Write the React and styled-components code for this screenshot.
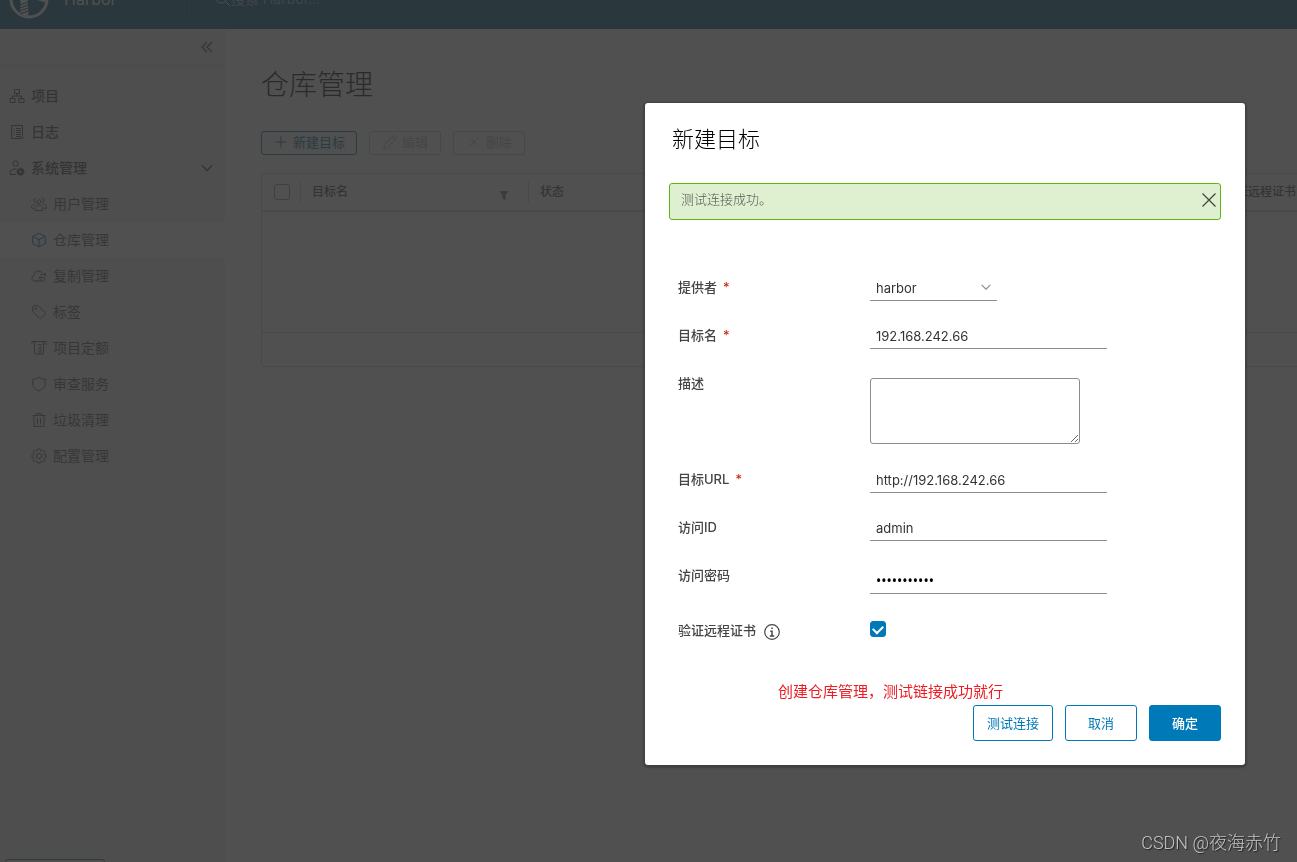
import React, { useState } from 'react'
import styled, { createGlobalStyle, css } from 'styled-components'

const menuItems = [
    { label: '用户管理', icon: 'users' },
    { label: '仓库管理', icon: 'block', active: true },
    { label: '复制管理', icon: 'cloud' },
    { label: '标签', icon: 'tag' },
    { label: '项目定额', icon: 'quota' },
    { label: '审查服务', icon: 'shield' },
    { label: '垃圾清理', icon: 'trash' },
    { label: '配置管理', icon: 'cog' },
]

const shapes = {
    organization: <path d="M5.5 1.5h5v4h-5zM1 10.5h5v4H1zM10 10.5h5v4h-5zM8 5.500v2.500M3.500 10V8h9v2" />,
    list: <><path d="M2.500 1.500h11v13h-11z" /><path d="M4.500 4.500h1M4.500 6.500h1M4.500 8.500h1M4.500 10.500h1M7 4.500h5M7 6.500h5M7 8.500h5M7 10.500h5M7 12.500h5" /></>,
    admin: <>
        <circle cx="6.500" cy="3.500" r="2.700" />
        <path d="M7 14.500H1.200v-2.500C2 9.700 4.500 8.500 7.500 9" />
        <circle cx="11.500" cy="11.700" r="2.200" strokeWidth="2" />
        <path d="M11.500 7.700v1.600M11.500 14.100v1.600M7.500 11.700h1.600M13.900 11.700h1.600M8.700 8.900l1.100 1.100M13.200 13.400l1.100 1.100M14.300 8.900l-1.100 1.100M9.800 13.400l-1.100 1.100" strokeWidth="1.500" />
    </>,
    users: <>
        <circle cx="8" cy="5.700" r="2" />
        <path d="M4.200 14.500v-2.700c.8-3.500 6.800-3.500 7.600 0v2.700zM4.800 6.500C2.300 6 2 2.500 4.800 2.200M11.200 6.500c2.500-.5 2.800-4 0-4.300M4 8.200C2.200 8.200 1 9 .7 10.500v1.800h2M12 8.200c1.800 0 3 .8 3.300 2.300v1.800h-2" />
    </>,
    block: <path d="M8 1.200l6.300 3.200v7.200L8 14.800l-6.300-3.200V4.400zM1.700 4.400L8 7.600l6.300-3.200M8 7.600v7.200" />,
    cloud: <path d="M14 10.500c-.3 1.800-1.300 2.500-3 2.500H4C.8 13-.3 9 2.700 7.800 2.800 3 9 1.500 11 5M9.500 6.500H15M13.300 4.800L15 6.500l-1.700 1.700M13.500 9.800H8M9.700 8.100L8 9.800l1.700 1.700" />,
    tag: <><path d="M1.700 2.700v4.800l6.800 6.800c.5.500 1 .5 1.500 0l4.200-4.200c.5-.5.5-1 0-1.500L7.500 1.800H2.600z" /><circle cx="4.600" cy="4.600" r=".7" /></>,
    quota: <path d="M1 4V1.500h14V5M3.500 1.500v11q0 1.500 1.500 1.500h7.500V1.500M7 4.500h3.500M8.500 6.500h2M7 8.500h3.500M8.500 10.500h2M7 12h3.500" />,
    shield: <path d="M8 1.200c2 1.400 4 2 6.200 2v5c0 3-2.500 5-6.200 6.800C4.300 13.200 1.800 11.200 1.800 8.200v-5C4 3.200 6 2.600 8 1.200z" />,
    trash: <path d="M1.500 3.500h13M5.500 3.500v-2h5v2M3 4v10.500h10V4M6.500 6v6.500M9.500 6v6.500" />,
    cog: <>
        <circle cx="8" cy="8" r="2.600" />
        <path d="M6.800 1h2.400l.5 1.900 1 .4 1.700-1 1.700 1.700-1 1.700.4 1 1.700.5v1.800l-1.700.5-.4 1 1 1.700-1.700 1.700-1.700-1-1 .4L9.200 15H6.800l-.5-1.700-1-.4-1.700 1-1.700-1.700 1-1.700-.4-1L.8 9V7.200l1.700-.5.4-1-1-1.700 1.700-1.700 1.700 1 1-.4z" />
    </>,
    search: <><circle cx="6.500" cy="6.500" r="5.500" /><path d="M10.500 10.500l5 5" /></>,
    collapse: <path d="M8 3L3 8l5 5M13 3L8 8l5 5" />,
    angle: <path d="M3 5.500l5 5 5-5" />,
    plus: <path d="M8 2.500v11M2.500 8h11" />,
    pencil: <path d="M1.500 14.500l1-4L11.800 1.200l3 3L5.500 13.500zM10 3l3 3" />,
    times: <path d="M3.500 3.500l9 9M12.500 3.500l-9 9" />,
    close: <path d="M1.500 1.500l13 13M14.500 1.500l-13 13" />,
    filter: <path d="M3.500 4h9L9.200 8v5l-2.400-1.200V8z" fill="currentColor" />,
    info: <><circle cx="8" cy="8" r="7.300" /><path d="M8 3.500v1.600M6.300 7.200H8v4.800M5.800 12.100h4.500" strokeWidth="1.500" /></>,
}

function Icon({ name, size = 16, weight = 1 }) {
    return (
        <Svg width={size} height={size} viewBox="0 0 16 16" strokeWidth={weight} aria-hidden="true">
            {shapes[name]}
        </Svg>
    )
}

function Logo() {
    return (
        <Svg width="40" height="40" viewBox="0 0 40 40" strokeWidth="3" aria-hidden="true">
            <circle cx="20" cy="20" r="18" />
            <path d="M12 8h6l1.500 29-8.500-2z" fill="currentColor" stroke="none" />
            <path d="M11 26l8-3M11 29l8-3M11 32l8-3M11 35l8-3" stroke="#00567a" strokeWidth="1" />
            <path d="M18 18l20 1v5z" fill="currentColor" stroke="none" />
        </Svg>
    )
}

function Sidebar() {
    return (
        <Side>
            <CollapseRow>
                <IconButton type="button" aria-label="collapse"><Icon name="collapse" weight={1.3} /></IconButton>
            </CollapseRow>
            <Nav>
                <NavLink href="#projects"><Icon name="organization" />项目</NavLink>
                <NavLink href="#logs"><Icon name="list" />日志</NavLink>
                <NavLink href="#admin"><Icon name="admin" /><span>系统管理</span><Icon name="angle" weight={1.5} /></NavLink>
                {menuItems.map((item) => (
                    <NavLink key={item.icon} href={'#' + item.icon} $sub $active={item.active}>
                        <Icon name={item.icon} />{item.label}
                    </NavLink>
                ))}
            </Nav>
            <SideFoot>
                <ThemeButton type="button" aria-label="theme" />
            </SideFoot>
        </Side>
    )
}

function Registries() {
    return (
        <Main>
            <PageTitle>仓库管理</PageTitle>
            <Toolbar>
                <SmallButton type="button" $primary><Icon name="plus" />新建目标</SmallButton>
                <SmallButton type="button" disabled><Icon name="pencil" />编辑</SmallButton>
                <SmallButton type="button" disabled><Icon name="times" />删除</SmallButton>
            </Toolbar>
            <Grid>
                <thead>
                    <tr>
                        <CheckHead><GridCheck type="checkbox" aria-label="select all" /></CheckHead>
                        <Head><HeadCell>目标名<Icon name="filter" size={14} /></HeadCell></Head>
                        <Head><HeadCell>状态</HeadCell></Head>
                        <Head><HeadCell>目标URL</HeadCell></Head>
                        <Head><HeadCell>提供者</HeadCell></Head>
                        <Head><HeadCell>验证远程证书</HeadCell></Head>
                    </tr>
                </thead>
                <tbody>
                    <tr><EmptyCell colSpan="6" /></tr>
                </tbody>
                <tfoot>
                    <tr><FootCell colSpan="6" /></tr>
                </tfoot>
            </Grid>
        </Main>
    )
}

function CreateDialog() {
    const [values, setValues] = useState({
        provider: 'harbor',
        name: '192.168.242.66',
        description: '',
        url: 'http://192.168.242.66',
        accessId: 'admin',
        secret: 'Harbor12345',
        verify: true,
    })

    const change = (key) => (e) => {
        const value = e.target.type === 'checkbox' ? e.target.checked : e.target.value
        setValues({ ...values, [key]: value })
    }

    return (
        <Dialog role="dialog" aria-labelledby="dialog-title">
            <DialogTitle id="dialog-title">新建目标</DialogTitle>
            <Alert>
                <span>测试连接成功。</span>
                <IconButton type="button" aria-label="close"><Icon name="close" weight={1.3} /></IconButton>
            </Alert>
            <Form>
                <Row>
                    <Label htmlFor="provider">提供者<Required>*</Required></Label>
                    <SelectWrap>
                        <Select id="provider" value={values.provider} onChange={change('provider')}>
                            <option>harbor</option>
                        </Select>
                        <Icon name="angle" size={14} weight={1.3} />
                    </SelectWrap>
                </Row>
                <Row>
                    <Label htmlFor="name">目标名<Required>*</Required></Label>
                    <Input id="name" value={values.name} onChange={change('name')} />
                </Row>
                <Row>
                    <Label htmlFor="description">描述</Label>
                    <TextArea id="description" value={values.description} onChange={change('description')} />
                </Row>
                <Row>
                    <Label htmlFor="url">目标URL<Required>*</Required></Label>
                    <Input id="url" value={values.url} onChange={change('url')} />
                </Row>
                <Row>
                    <Label htmlFor="accessId">访问ID</Label>
                    <Input id="accessId" value={values.accessId} onChange={change('accessId')} />
                </Row>
                <Row>
                    <Label htmlFor="secret">访问密码</Label>
                    <Password id="secret" type="password" value={values.secret} onChange={change('secret')} />
                </Row>
                <Row $center>
                    <Label htmlFor="verify">验证远程证书<Icon name="info" weight={1.2} /></Label>
                    <Checkbox id="verify" type="checkbox" checked={values.verify} onChange={change('verify')} />
                </Row>
            </Form>
            <Note>创建仓库管理，测试链接成功就行</Note>
            <Footer>
                <Button type="button" $wide>测试连接</Button>
                <Button type="button">取消</Button>
                <Button type="button" $solid>确定</Button>
            </Footer>
        </Dialog>
    )
}

function App() {
    return (
        <React.Fragment>
            <GlobalStyle />
            <Page>
                <Header>
                    <HeaderInner>
                        <Brand href="#home"><Logo />Harbor</Brand>
                        <SearchBox>
                            <Icon name="search" />
                            <SearchInput aria-label="search" placeholder="搜索 Harbor..." />
                        </SearchBox>
                    </HeaderInner>
                </Header>
                <Content>
                    <Sidebar />
                    <Registries />
                </Content>
            </Page>
            <Backdrop>
                <CreateDialog />
            </Backdrop>
            <Watermark>CSDN @夜海赤竹</Watermark>
        </React.Fragment>
    )
}

export default App

const GlobalStyle = createGlobalStyle`
* {
    box-sizing: border-box;
}
body {
    margin: 0;
    background: #fafafa;
    color: #454545;
    font-family: Inter, "Noto Sans CJK SC", sans-serif;
    font-size: 13px;
    line-height: 20px;
}
button, input, select, textarea {
    font: inherit;
    color: inherit;
}
`

const Svg = styled.svg`
flex: none;
fill: none;
stroke: currentColor;
`

const Page = styled.div`
display: flex;
flex-direction: column;
height: 100vh;
overflow: hidden;
`

// only the lower part of the bar stays in view
const Header = styled.header`
display: flex;
align-items: flex-end;
flex: none;
height: 29px;
overflow: hidden;
background: #00567a;
color: #fafafa;
`

const HeaderInner = styled.div`
display: flex;
align-items: center;
flex: none;
width: 100%;
height: 60px;
`

const Brand = styled.a`
display: flex;
align-items: center;
gap: 15px;
width: 190px;
height: 38px;
padding-left: 9px;
border-right: 1px solid #1f6a8a;
color: inherit;
font-size: 16px;
text-decoration: none;
`

const SearchBox = styled.div`
display: flex;
align-items: center;
padding-left: 25px;
`

const SearchInput = styled.input`
width: 200px;
padding: 0;
border: 0;
background: none;
font-size: 14px;
&::placeholder {
    color: #8fb4c8;
}
`

const Content = styled.div`
display: flex;
flex: 1;
min-height: 0;
`

const Side = styled.aside`
display: flex;
flex-direction: column;
flex: none;
width: 225px;
background: #eee;
`

const CollapseRow = styled.div`
display: flex;
justify-content: flex-end;
align-items: center;
height: 37px;
padding-right: 10px;
border-bottom: 1px solid #d8d8d8;
`

const IconButton = styled.button`
display: flex;
padding: 0;
border: 0;
background: none;
color: #454545;
cursor: pointer;
`

const Nav = styled.nav`
display: flex;
flex-direction: column;
flex: 1;
padding-top: 12px;
`

const NavLink = styled.a`
display: flex;
align-items: center;
gap: 6px;
height: 36px;
padding: 0 10px 0 ${(props) => props.$sub ? '31px' : '9px'};
background: ${(props) => props.$active ? '#fcfcfc' : 'none'};
color: ${(props) => props.$sub ? '#565656' : '#454545'};
font-size: 14px;
font-weight: ${(props) => props.$sub ? 400 : 500};
text-decoration: none;
& > span {
    flex: 1;
}
& > svg {
    color: ${(props) => props.$active ? '#0072a3' : 'inherit'};
}
`

const SideFoot = styled.div`
height: 3px;
padding-left: 5px;
overflow: hidden;
`

const ThemeButton = styled.button`
display: block;
width: 100px;
height: 24px;
border: 1px solid #0072a3;
border-radius: 3px;
background: none;
`

const Main = styled.main`
flex: 1;
min-width: 0;
padding: 36px 0 0 36px;
overflow: hidden;
`

const PageTitle = styled.h1`
margin: 0;
color: #000;
font-size: 28px;
font-weight: 200;
line-height: 40px;
`

const Toolbar = styled.div`
display: flex;
gap: 12px;
margin: 26px 0 18px;
`

const SmallButton = styled.button`
display: flex;
align-items: center;
justify-content: center;
gap: 4px;
min-width: 72px;
height: 24px;
padding: 0 11px 2px;
border: 1px solid ${(props) => props.$primary ? '#0072a3' : '#c1c1c1'};
border-radius: 3px;
background: none;
color: ${(props) => props.$primary ? '#0072a3' : '#b5b5b5'};
`

const Grid = styled.table`
width: 1180px;
table-layout: fixed;
border: 1px solid #ccc;
border-radius: 3px;
border-spacing: 0;
`

const Head = styled.th`
height: 38px;
padding: 0;
border-bottom: 2px solid #d8d8d8;
font-size: 12px;
font-weight: 500;
text-align: left;
`

const CheckHead = styled(Head)`
width: 38px;
padding-left: 12px;
`

const HeadCell = styled.div`
display: flex;
align-items: center;
justify-content: space-between;
height: 24px;
padding: 0 17px 0 11px;
border-left: 1px solid #d8d8d8;
& > svg {
    align-self: flex-end;
    margin-bottom: 2px;
    color: #737373;
}
`

const GridCheck = styled.input`
appearance: none;
display: block;
width: 16px;
height: 16px;
margin: 0;
border: 1px solid #8c8c8c;
border-radius: 3px;
`

const EmptyCell = styled.td`
height: 120px;
padding: 0;
`

const FootCell = styled.td`
height: 34px;
padding: 0;
border-top: 1px solid #ccc;
`

const Backdrop = styled.div`
position: fixed;
inset: 0;
display: flex;
align-items: flex-start;
justify-content: flex-end;
padding: 103px 52px 0;
overflow: auto;
background: rgba(49, 49, 49, 0.85);
`

const Dialog = styled.section`
width: 600px;
padding: 24px;
border-radius: 3px;
background: #fff;
box-shadow: 0 1px 2px 2px rgba(0, 0, 0, 0.2);
`

const DialogTitle = styled.h2`
margin: 0;
padding-left: 3px;
color: #000;
font-size: 22px;
font-weight: 200;
line-height: 24px;
`

const Alert = styled.div`
display: flex;
align-items: flex-start;
justify-content: space-between;
height: 37px;
margin-top: 32px;
padding: 5px 3px 5px 11px;
border: 1px solid #60b515;
border-radius: 3px;
background: #dff0d0;
color: #565656;
& > span {
    font-weight: 300;
}
& > button {
    padding: 3px 0;
}
`

const Form = styled.form`
display: flex;
flex-direction: column;
gap: 24px;
margin-top: 57px;
padding-left: 9px;
`

const Row = styled.div`
display: grid;
grid-template-columns: 192px 1fr;
justify-items: start;
align-items: ${(props) => props.$center ? 'center' : 'start'};
min-height: 24px;
`

const Label = styled.label`
display: flex;
align-items: center;
gap: 8px;
font-weight: 500;
& > svg {
    margin-top: 4px;
}
`

const Required = styled.span`
margin-left: -2px;
color: #c92100;
font-weight: 400;
`

const field = css`
height: 24px;
padding: 0 6px 2px;
border: 0;
border-bottom: 1px solid #8c8c8c;
border-radius: 0;
outline: 0;
background: none;
color: #333;
`

const Input = styled.input`
${field}
width: 237px;
`

const Password = styled(Input)`
height: 29px;
padding-top: 4px;
color: #000;
font-family: "Noto Sans", sans-serif;
font-size: 14px;
`

const SelectWrap = styled.div`
display: grid;
width: 127px;
& > * {
    grid-area: 1 / 1;
}
& > svg {
    justify-self: end;
    align-self: center;
    margin: 0 4px 4px 0;
    color: #8c8c8c;
    pointer-events: none;
}
`

const Select = styled.select`
${field}
appearance: none;
width: 100%;
`

const TextArea = styled.textarea`
width: 210px;
height: 66px;
margin: 5px 0 1px;
padding: 4px 6px;
border: 1px solid #8c8c8c;
border-radius: 3px;
outline: 0;
background: none;
`

const Checkbox = styled.input`
appearance: none;
display: grid;
place-items: center;
width: 16px;
height: 16px;
margin: 0 0 2px;
border: 1px solid #0079b8;
border-radius: 3px;
&:checked {
    background: #0079b8;
}
&:checked::before {
    content: "";
    width: 8px;
    height: 5px;
    border: solid #fff;
    border-width: 0 0 2px 2px;
    transform: translateY(-1px) rotate(-45deg);
}
`

const Note = styled.p`
margin: 40px 0 3px;
padding-left: 109px;
color: #ed1c24;
font-size: 15px;
`

const Footer = styled.div`
display: flex;
justify-content: flex-end;
gap: 12px;
`

const Button = styled.button`
width: ${(props) => props.$wide ? '80px' : '72px'};
height: 36px;
padding: 0;
border: 1px solid #0079b8;
border-radius: 3px;
background: ${(props) => props.$solid ? '#0079b8' : '#fff'};
color: ${(props) => props.$solid ? '#fff' : '#0079b8'};
font-weight: ${(props) => props.$solid ? 500 : 400};
cursor: pointer;
`

const Watermark = styled.div`
position: fixed;
right: 16px;
bottom: 8px;
color: #c4c4c4;
font-family: Roboto, "Noto Sans CJK SC", sans-serif;
font-size: 18px;
font-weight: 300;
line-height: 22px;
text-shadow: 1px 1px 1px #222;
`
